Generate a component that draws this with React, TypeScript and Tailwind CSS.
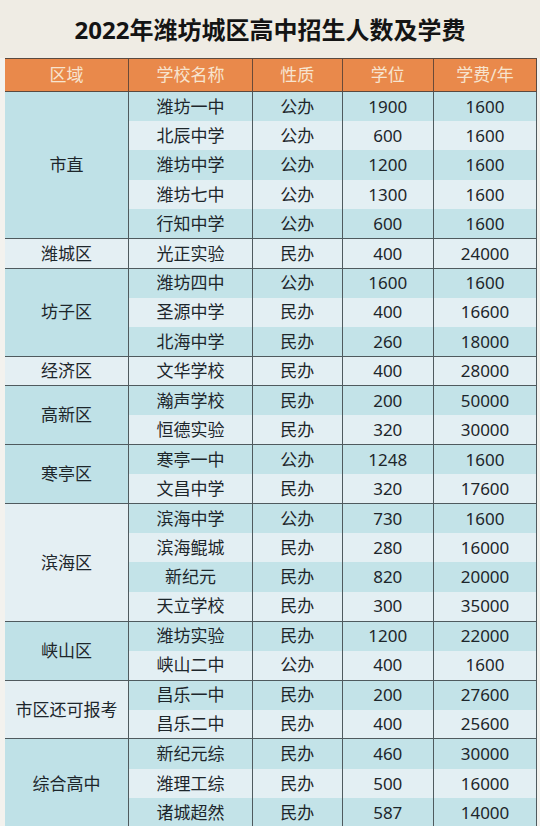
import React from "react";

type Row = [string, string, string, string];
type Group = { region: string; tone: "t" | "l"; rows: Row[] };

const groups: Group[] = [
  { region: "市直", tone: "t", rows: [["潍坊一中", "公办", "1900", "1600"], ["北辰中学", "公办", "600", "1600"], ["潍坊中学", "公办", "1200", "1600"], ["潍坊七中", "公办", "1300", "1600"], ["行知中学", "公办", "600", "1600"]] },
  { region: "潍城区", tone: "l", rows: [["光正实验", "民办", "400", "24000"]] },
  { region: "坊子区", tone: "t", rows: [["潍坊四中", "公办", "1600", "1600"], ["圣源中学", "民办", "400", "16600"], ["北海中学", "民办", "260", "18000"]] },
  { region: "经济区", tone: "l", rows: [["文华学校", "民办", "400", "28000"]] },
  { region: "高新区", tone: "t", rows: [["瀚声学校", "民办", "200", "50000"], ["恒德实验", "民办", "320", "30000"]] },
  { region: "寒亭区", tone: "t", rows: [["寒亭一中", "公办", "1248", "1600"], ["文昌中学", "民办", "320", "17600"]] },
  { region: "滨海区", tone: "l", rows: [["滨海中学", "公办", "730", "1600"], ["滨海鲲城", "民办", "280", "16000"], ["新纪元", "民办", "820", "20000"], ["天立学校", "民办", "300", "35000"]] },
  { region: "峡山区", tone: "t", rows: [["潍坊实验", "民办", "1200", "22000"], ["峡山二中", "公办", "400", "1600"]] },
  { region: "市区还可报考", tone: "l", rows: [["昌乐一中", "民办", "200", "27600"], ["昌乐二中", "民办", "400", "25600"]] },
  { region: "综合高中", tone: "t", rows: [["新纪元综", "民办", "460", "30000"], ["潍理工综", "民办", "500", "16000"], ["诸城超然", "民办", "587", "14000"]] },
];

const heightClass: Record<number, string> = {
  1: "h-[29.43px]",
  2: "h-[58.86px]",
  3: "h-[88.29px]",
  4: "h-[117.72px]",
  5: "h-[147.15px]",
};

const font = { fontFamily: '"Noto Sans", "Noto Sans CJK SC", sans-serif' };

export default function App() {
  let idx = 0;
  return (
    <div className="w-[540px] h-[826px] overflow-hidden bg-[#f3f2ee] text-[#1d262b]" style={font}>
      <div className="h-[58px] flex items-center justify-center pt-[2px] bg-[#efece4]">
        <h1 className="text-[24px] font-bold text-[#141414]">2022年潍坊城区高中招生人数及学费</h1>
      </div>
      <div className="ml-[5px] w-[532px] bg-[#e3eff3]">
        <div className="flex h-[34px] bg-[#e9894b] text-[#f7e4cf] text-[17px] border-y border-[#5a4a40] border-r">
          <div className="w-[124px] flex items-center justify-center border-r border-[#6a4a38]">区域</div>
          <div className="w-[124px] flex items-center justify-center border-r border-[#6a4a38]">学校名称</div>
          <div className="w-[89.5px] flex items-center justify-center border-r border-[#6a4a38]">性质</div>
          <div className="w-[91.5px] flex items-center justify-center border-r border-[#6a4a38]">学位</div>
          <div className="flex-1 flex items-center justify-center">学费/年</div>
        </div>
        {groups.map((g, gi) => (
          <div
            key={g.region}
            className={`flex border-r border-[#4f5a5e] ${gi < groups.length - 1 ? "border-b border-b-[#4f5a5e]" : ""} ${heightClass[g.rows.length]}`}
          >
            <div
              className={`w-[124px] shrink-0 flex items-center justify-center text-[17px] border-r border-[#4f5a5e] ${g.tone === "t" ? "bg-[#bfe1e7]" : "bg-[#e4eff3]"}`}
            >
              {g.region}
            </div>
            <div className="flex-1 flex flex-col">
              {g.rows.map((r) => {
                const even = idx % 2 === 0;
                idx++;
                return (
                  <div
                    key={r[0]}
                    className={`flex-1 flex text-[17px] ${even ? "bg-[#c3e3e8]" : "bg-[#e3eff3]"}`}
                  >
                    <div className="w-[124px] flex items-center justify-center border-r border-[#4f5a5e]">{r[0]}</div>
                    <div className="w-[89.5px] flex items-center justify-center border-r border-[#4f5a5e]">{r[1]}</div>
                    <div className="w-[91.5px] flex items-center justify-center border-r border-[#4f5a5e]">{r[2]}</div>
                    <div className="flex-1 flex items-center justify-center">{r[3]}</div>
                  </div>
                );
              })}
            </div>
          </div>
        ))}
      </div>
    </div>
  );
}
